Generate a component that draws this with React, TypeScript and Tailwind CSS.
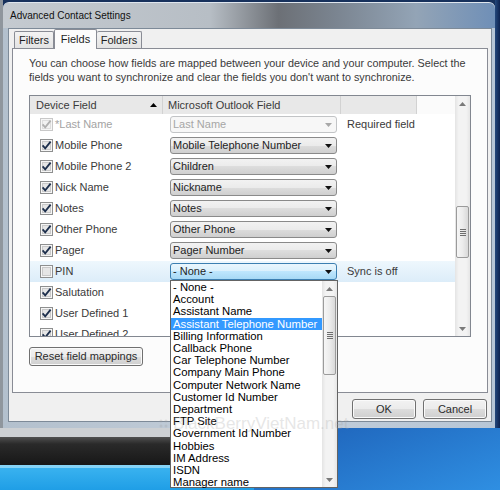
import React from 'react'

type Row = {
	label: string
	value: string
	checked: boolean
	disabled?: boolean
	hot?: boolean
	note?: string
}

const rows: Row[] = [
	{ label: '*Last Name', value: 'Last Name', checked: true, disabled: true, note: 'Required field' },
	{ label: 'Mobile Phone', value: 'Mobile Telephone Number', checked: true },
	{ label: 'Mobile Phone 2', value: 'Children', checked: true },
	{ label: 'Nick Name', value: 'Nickname', checked: true },
	{ label: 'Notes', value: 'Notes', checked: true },
	{ label: 'Other Phone', value: 'Other Phone', checked: true },
	{ label: 'Pager', value: 'Pager Number', checked: true },
	{ label: 'PIN', value: '- None -', checked: false, hot: true, note: 'Sync is off' },
	{ label: 'Salutation', value: '', checked: true },
	{ label: 'User Defined 1', value: '', checked: true },
	{ label: 'User Defined 2', value: '', checked: true },
]

const options = [
	'- None -',
	'Account',
	'Assistant Name',
	'Assistant Telephone Number',
	'Billing Information',
	'Callback Phone',
	'Car Telephone Number',
	'Company Main Phone',
	'Computer Network Name',
	'Customer Id Number',
	'Department',
	'FTP Site',
	'Government Id Number',
	'Hobbies',
	'IM Address',
	'ISDN',
	'Manager name',
]

const btn =
	'flex items-center justify-center rounded-[3px] border border-[#707070] bg-[linear-gradient(#f2f2f2,#ebebeb_50%,#dddddd_50%,#cfcfcf)] shadow-[inset_0_0_0_1px_#fafafa] text-[11px] text-[#2b2b2b]'

function Arrow({ up, color = '#000' }: { up?: boolean; color?: string }) {
	return (
		<svg width="7" height="4" viewBox="0 0 7 4" className="shrink-0">
			<path d={up ? 'M0 4 L3.5 0 L7 4 Z' : 'M0 0 L7 0 L3.5 4 Z'} fill={color} />
		</svg>
	)
}

function CheckBox({ checked, disabled }: { checked: boolean; disabled?: boolean }) {
	return (
		<svg width="13" height="13" viewBox="0 0 13 13" className="shrink-0">
			<rect x="0.5" y="0.5" width="12" height="12" fill="#f6f6f6" stroke={disabled ? '#c8c8c8' : '#8e8f8f'} />
			<rect x="2.5" y="2.5" width="8" height="8" fill={disabled ? '#f2f2f2' : '#e6e6e6'} stroke={disabled ? '#dedede' : '#c9c9c9'} />
			{checked && (
				<path
					d="M2.6 6.4 L5.2 9.4 L10.6 2.6"
					fill="none"
					stroke={disabled ? '#b0b0b0' : '#1d2f4c'}
					strokeWidth="1.8"
				/>
			)}
		</svg>
	)
}

function Combo({ value, disabled, hot }: { value: string; disabled?: boolean; hot?: boolean }) {
	const skin = disabled
		? 'border-[#c2c4c6] bg-[#f7f7f7] text-[#a6a6a6]'
		: hot
			? 'border-[#3c7fb1] bg-[linear-gradient(#eaf6fd,#d9f0fc_50%,#bee6fd_50%,#a7d9f5)] text-[#1e1e1e]'
			: 'border-[#8a8a8a] bg-[linear-gradient(#f2f2f2,#ebebeb_50%,#dddddd_50%,#cfcfcf)] text-[#1e1e1e]'
	return (
		<div className={`flex h-[17px] w-[167px] items-center rounded-[3px] border pl-[2px] pr-[4px] text-[11px] ${skin}`}>
			<span className="flex-1 truncate">{value}</span>
			<Arrow color={disabled ? '#a8a8a8' : '#111'} />
		</div>
	)
}

function ScrollBar({ thumb, className = '' }: { thumb: string; className?: string }) {
	return (
		<div className={`flex w-[15px] shrink-0 flex-col bg-[linear-gradient(90deg,#e4e4e4,#f3f3f3_25%,#f3f3f3_75%,#e6e6e6)] ${className}`}>
			<div className="flex h-[15px] items-center justify-center">
				<Arrow up color="#7a7a7a" />
			</div>
			<div className="flex-1">
				<div
					className={`mx-auto flex w-[13px] flex-col items-center justify-center gap-[1px] rounded-[2px] border border-[#9b9b9b] bg-[linear-gradient(90deg,#f6f6f6,#ececec_50%,#d9d9d9)] ${thumb}`}
				>
					<div className="h-px w-[6px] bg-[#6e6e6e]" />
					<div className="h-px w-[6px] bg-[#6e6e6e]" />
					<div className="h-px w-[6px] bg-[#6e6e6e]" />
					<div className="h-px w-[6px] bg-[#6e6e6e]" />
				</div>
			</div>
			<div className="flex h-[15px] items-center justify-center">
				<Arrow color="#7a7a7a" />
			</div>
		</div>
	)
}

function FieldList() {
	return (
		<div className="mt-[11px] flex h-[242px] w-[442px] border border-[#828790] bg-white">
			<div className="flex flex-1 flex-col overflow-hidden">
				<div className="flex h-[18px] shrink-0 text-[11px] text-[#3a3a3a]">
					<div className="flex w-[133px] items-center border-r border-[#d2d2d2] bg-[#e8e8e8] pl-[6px] pr-[5px]">
						<span className="flex-1">Device Field</span>
						<Arrow up />
					</div>
					<div className="flex w-[178px] items-center border-r border-[#d2d2d2] bg-[#e8e8e8] pl-[5px]">
						Microsoft Outlook Field
					</div>
					<div className="w-[76px] border-r border-[#d2d2d2] bg-[#e8e8e8]" />
					<div className="flex-1 bg-[#fbfbfb]" />
				</div>
				{rows.map((row) => (
					<div
						key={row.label}
						className={`flex h-[21px] shrink-0 items-center text-[11px] ${
							row.hot ? 'bg-[linear-gradient(#eef7fd,#dcedf9)]' : ''
						}`}
					>
						<div
							className={`flex w-[133px] items-center gap-[2px] pl-[10px] ${
								row.disabled ? 'text-[#a3a3a3]' : 'text-[#3a3a3a]'
							}`}
						>
							<CheckBox checked={row.checked} disabled={row.disabled} />
							<span>{row.label}</span>
						</div>
						<div className="w-[178px] pl-[7px]">
							<Combo value={row.value} disabled={row.disabled} hot={row.hot} />
						</div>
						<div className="pl-[6px] text-[#3a3a3a]">{row.note}</div>
					</div>
				))}
			</div>
			<ScrollBar thumb="mt-[95px] h-[52px]" />
		</div>
	)
}

function Window() {
	return (
		<div className="mt-[2px] flex w-[492px] flex-col rounded-t-[6px] border-t border-[#dfe6ee] bg-[linear-gradient(90deg,#b3c0cd,#c3ceda_50%,#b7c6d6)]">
			<div className="flex h-[25px] items-center rounded-t-[6px] bg-[linear-gradient(90deg,#c4cad0_0%,#b7bec5_42%,#6c7076_56%,#7b8591_68%,#93a4b6_84%,#6f8fb7_100%)] pl-[7px] text-[10px] text-[#111]">
				Advanced Contact Settings
			</div>
			<div className="flex flex-1 pb-[6px] pl-[5px] pr-[3px]">
				<div className="flex flex-1 flex-col border border-[#7d8a98] bg-[#f0f0f0] px-[3px]">
					<div className="flex h-[19px] items-end pl-[2px] text-[11px] text-[#1e1e1e]">
						<div className="flex h-[17px] w-[40px] items-center justify-center rounded-t-[2px] border border-b-0 border-[#898c95] bg-[linear-gradient(#f3f3f3,#e3e3e3)]">
							Filters
						</div>
						<div className="relative z-10 -mb-px flex h-[20px] w-[43px] items-center justify-center rounded-t-[2px] border border-b-0 border-[#898c95] bg-[#fcfcfc] pb-[1px]">
							Fields
						</div>
						<div className="flex h-[17px] w-[45px] items-center justify-center rounded-t-[2px] border border-b-0 border-l-0 border-[#898c95] bg-[linear-gradient(#f3f3f3,#e3e3e3)]">
							Folders
						</div>
					</div>
					<div className="flex h-[345px] flex-col border border-[#898c95] bg-[#fcfcfc] pl-[16px] pt-[7px]">
						<p className="whitespace-nowrap text-[10.8px] leading-[14px] text-[#3a3a3a]">
							You can choose how fields are mapped between your device and your computer. Select the
							<br />
							fields you want to synchronize and clear the fields you don't want to synchronize.
						</p>
						<FieldList />
						<button className={`${btn} mt-[10px] h-[19px] w-[114px]`}>Reset field mappings</button>
					</div>
					<div className="mt-[6px] flex justify-end gap-[7px] pr-[1px]">
						<button className={`${btn} h-[20px] w-[64px]`}>OK</button>
						<button className={`${btn} h-[20px] w-[64px]`}>Cancel</button>
					</div>
				</div>
			</div>
		</div>
	)
}

function Dropdown() {
	return (
		<div className="absolute left-[170px] top-[280px] flex h-[208px] w-[168px] border border-[#646464] bg-white">
			<div className="flex-1 pt-0 text-[11.3px] leading-[12.2px] text-black">
				{options.map((o) => (
					<div
						key={o}
						className={`whitespace-nowrap pl-[2px] ${o === 'Assistant Telephone Number' ? 'bg-[#3399ff] text-white' : ''}`}
					>
						{o}
					</div>
				))}
			</div>
			<ScrollBar thumb="h-[79px]" />
		</div>
	)
}

export default function App() {
	return (
		<div className="relative flex h-[490px] w-[500px] flex-col overflow-hidden bg-[#17315c] font-['Liberation_Sans',Arial,sans-serif]">
			<div className="flex h-[428px]">
				<div className="w-[3px] bg-[#8f969d]" />
				<Window />
				<div className="flex-1 bg-[linear-gradient(90deg,#24487c,#0e2350)]" />
			</div>
			<div className="flex flex-1">
				<div className="flex w-[254px] flex-col">
					<div className="h-[9px] bg-[#cdd0d3]" />
					<div className="h-[28px] bg-[linear-gradient(#505050,#2a2a2a_25%,#171717)]" />
					<div className="h-[3px] bg-[#86d3f6]" />
					<div className="flex-1 bg-[linear-gradient(#39b2ef,#1f9ee6)]" />
				</div>
				<div className="flex-1 bg-[linear-gradient(160deg,#1d5fb6,#2f8fe2)]" />
			</div>
			<Dropdown />
			<div className="pointer-events-none absolute left-[158px] top-[411px] flex items-center gap-[3px] text-[17px] text-[#a0a0a0] opacity-25">
				<svg width="12" height="12" viewBox="0 0 12 12">
					<circle cx="3" cy="3" r="1.5" fill="#a0a0a0" />
					<circle cx="8" cy="3" r="1.5" fill="#a0a0a0" />
					<circle cx="3" cy="8" r="1.5" fill="#a0a0a0" />
					<circle cx="8" cy="8" r="1.5" fill="#a0a0a0" />
				</svg>
				<span>BlackBerryVietNam.net</span>
			</div>
		</div>
	)
}
